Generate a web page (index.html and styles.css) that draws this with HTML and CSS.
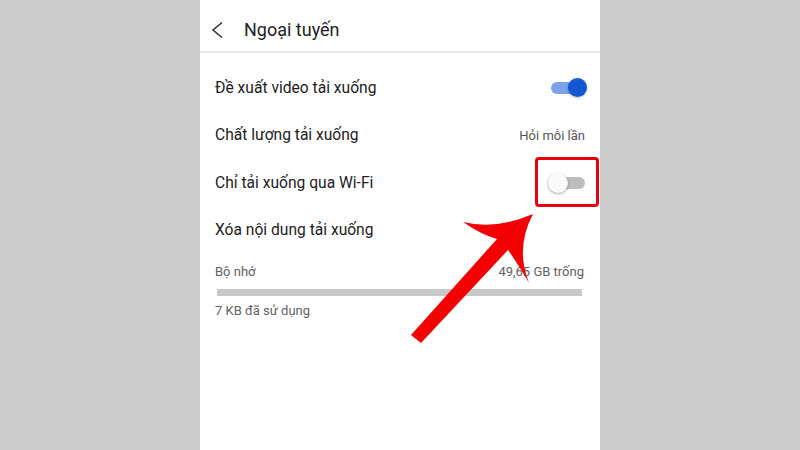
FILE: index.html
```html
<!DOCTYPE html>
<html lang="vi">
<head>
    <meta charset="UTF-8">
    <meta name="viewport" content="width=device-width, initial-scale=1.0">
    <title>Ngoại tuyến</title>
    <link rel="stylesheet" href="styles.css">
</head>
<body>
    <div class="phone">
        <div class="topbar">
            <svg class="back" width="14" height="18" viewBox="0 0 14 18">
                <path d="M11 1.5 L2 9 L11 16.5" fill="none" stroke="#333" stroke-width="1.6"/>
            </svg>
            <h1>Ngoại tuyến</h1>
        </div>

        <div class="settings">
            <div class="row">
                <span>Đề xuất video tải xuống</span>
                <div class="switch on"><div class="knob"></div></div>
            </div>
            <div class="row">
                <span>Chất lượng tải xuống</span>
                <span class="value">Hỏi mỗi lần</span>
            </div>
            <div class="row">
                <span>Chỉ tải xuống qua Wi-Fi</span>
                <div class="switch"><div class="knob"></div></div>
            </div>
            <div class="row">
                <span>Xóa nội dung tải xuống</span>
            </div>
        </div>

        <div class="storage">
            <div class="storage-head">
                <span>Bộ nhớ</span>
                <span>49,65 GB trống</span>
            </div>
            <div class="bar"></div>
            <div class="used">7 KB đã sử dụng</div>
        </div>

        <!-- chú thích: khung + mũi tên đỏ -->
        <div class="highlight"></div>
        <svg class="arrow" width="400" height="450" viewBox="0 0 400 450">
            <path d="M211 335 L297 239 Q282 235 263 222 Q296 230 333 214 Q315 248 329 283 Q318 264 308 250 L221 343 Z" fill="#f40000"/>
        </svg>
    </div>
</body>
</html>
```

FILE: styles.css
```css
* {
    box-sizing: border-box;
    font-family: Roboto, 'Noto Sans', sans-serif;
}

body {
    margin: 0;
    background: #cccccc;
    display: flex;
    justify-content: center;
    min-height: 100vh;
}

.phone {
    position: relative;
    width: 400px;
    height: 450px;
    background: #fff;
    overflow: hidden;
}

.topbar {
    height: 53px;
    display: flex;
    align-items: center;
    padding: 8px 0 0 11px;
    border-bottom: 2px solid #ececec;
}

.back {
    margin-right: 19px;
    margin-top: 1px;
}

h1 {
    margin: 0;
    font-size: 18px;
    font-weight: 400;
    color: #222;
}

.settings {
    padding: 11px 14px 0 15px;
}

.row {
    height: 47.5px;
    display: flex;
    align-items: center;
    justify-content: space-between;
    font-size: 15.6px;
    color: #212121;
}

.value {
    font-size: 13px;
    color: #555;
    margin-right: 1px;
}

.switch {
    position: relative;
    width: 37px;
    height: 12px;
    border-radius: 6px;
    background: #bdbdbd;
    margin-right: 1px;
}

.switch .knob {
    position: absolute;
    left: 0;
    top: -4px;
    width: 20px;
    height: 20px;
    border-radius: 50%;
    background: #fafafa;
    box-shadow: 0 1px 3px rgba(0,0,0,0.35);
}

.switch.on {
    width: 33px;
    background: #7aa3ea;
    margin-right: 2px;
}

.switch.on .knob {
    left: auto;
    right: -3px;
    top: -4px;
    width: 19px;
    height: 19px;
    background: #1457d2;
    box-shadow: 0 1px 3px rgba(0,0,0,0.25);
}

.storage {
    padding: 10px 16px 0 15px;
    font-size: 13px;
    color: #616161;
}

.storage-head {
    display: flex;
    justify-content: space-between;
    line-height: 16px;
}

.bar {
    height: 7px;
    margin: 9px 2px 0 2px;
    background: #c8c8c8;
}

.used {
    margin-top: 7px;
    line-height: 16px;
}

.highlight {
    position: absolute;
    left: 335px;
    top: 157px;
    width: 64px;
    height: 50px;
    border: 3px solid #e8000c;
    border-radius: 4px;
}

.arrow {
    position: absolute;
    left: 0;
    top: 0;
}
```
